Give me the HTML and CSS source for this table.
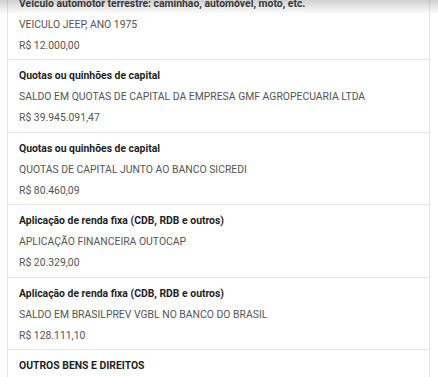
FILE: index.html
```html
<!DOCTYPE html>
<html lang="pt-BR">
<head>
<meta charset="utf-8">
<link rel="stylesheet" href="styles.css">
</head>
<body>
<div class="top-shadow"></div>
<div class="list">
  <div class="item">
    <div class="title">Veículo automotor terrestre: caminhão, automóvel, moto, etc.</div>
    <div class="desc">VEICULO JEEP, ANO 1975</div>
    <div class="value">R$ 12.000,00</div>
  </div>
  <div class="item">
    <div class="title">Quotas ou quinhões de capital</div>
    <div class="desc">SALDO EM QUOTAS DE CAPITAL DA EMPRESA GMF AGROPECUARIA LTDA</div>
    <div class="value">R$ 39.945.091,47</div>
  </div>
  <div class="item">
    <div class="title">Quotas ou quinhões de capital</div>
    <div class="desc">QUOTAS DE CAPITAL JUNTO AO BANCO SICREDI</div>
    <div class="value">R$ 80.460,09</div>
  </div>
  <div class="item">
    <div class="title">Aplicação de renda fixa (CDB, RDB e outros)</div>
    <div class="desc">APLICAÇÃO FINANCEIRA OUTOCAP</div>
    <div class="value">R$ 20.329,00</div>
  </div>
  <div class="item">
    <div class="title">Aplicação de renda fixa (CDB, RDB e outros)</div>
    <div class="desc">SALDO EM BRASILPREV VGBL NO BANCO DO BRASIL</div>
    <div class="value">R$ 128.111,10</div>
  </div>
  <div class="item">
    <div class="title">OUTROS BENS E DIREITOS</div>
    <div class="desc">OUTROS</div>
    <div class="value">R$ 0,00</div>
  </div>
</div>
</body>
</html>
```
FILE: styles.css
```css
html, body {
  margin: 0;
  padding: 0;
  background: #ffffff;
  overflow: hidden;
}
body {
  font-family: Roboto, "Liberation Sans", Arial, sans-serif;
  font-size: 10.4px;
  color: #222;
}
.top-shadow {
  position: fixed;
  top: 0;
  left: 0;
  right: 0;
  height: 14px;
  background: linear-gradient(to bottom, rgba(120,120,120,0.35), rgba(120,120,120,0));
  pointer-events: none;
  z-index: 2;
}
.list {
  margin: -12px 0 0 7px;
  width: 421px;
  border-left: 1px solid #e6e6e6;
  border-right: 1px solid #e6e6e6;
}
.item {
  padding: 5px 12px 3.4px 11px;
  border-bottom: 1px solid #e6e6e6;
}
.title {
  font-weight: 700;
  line-height: 21px;
  color: #1f1f1f;
}
.desc, .value {
  line-height: 21px;
  color: #555;
}
```
